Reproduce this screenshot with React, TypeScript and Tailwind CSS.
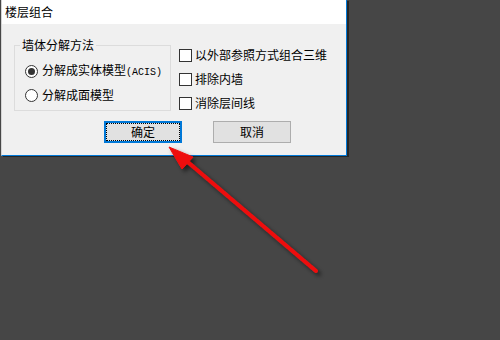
import React from "react";

const Radio = ({ checked, label }: { checked?: boolean; label: React.ReactNode }) => (
    <div className="h-6 flex flex-row items-center">
        <span className="ml-[10px] w-[13px] h-[13px] rounded-full border border-[#333333] bg-white flex items-center justify-center">
            {checked && <span className="w-[7px] h-[7px] rounded-full bg-[#333333]" />}
        </span>
        <span className="ml-[4px] leading-none">{label}</span>
    </div>
);

const Check = ({ label }: { label: string }) => (
    <div className="h-6 flex flex-row items-center">
        <span className="w-[13px] h-[13px] border border-[#333333] bg-white" />
        <span className="ml-[3px] leading-none">{label}</span>
    </div>
);

const App = () => {
    return (
        <div className="relative w-[500px] h-[340px] bg-[#464646] overflow-hidden text-[12px] text-black font-['Noto_Sans_CJK_SC',sans-serif]">
            {/* 对话框 */}
            <div className="ml-px w-[346px] h-[156px] flex flex-col border-l border-l-[#d4d4d4] border-r border-r-[#0078d7] border-b border-b-[#0078d7] shadow-[2px_1px_0_#262626] bg-[#f0f0f0]">
                <div className="h-6 shrink-0 bg-white flex items-center pl-[3px]">楼层组合</div>

                <div className="flex flex-col">
                    <div className="flex flex-row items-start pt-[14px]">
                        <fieldset className="ml-3 w-[157px] border border-[#dcdcdc] pb-[3px]">
                            <legend className="ml-[5px] px-[2px] leading-[14px]">墙体分解方法</legend>
                            <div className="mt-[7px]">
                                <Radio
                                    checked
                                    label={
                                        <>
                                            分解成实体模型
                                            <span className="font-['Liberation_Mono',monospace] text-[10px]">(ACIS)</span>
                                        </>
                                    }
                                />
                                <Radio label="分解成面模型" />
                            </div>
                        </fieldset>

                        <div className="ml-2 mt-[5px] flex flex-col">
                            <Check label="以外部参照方式组合三维" />
                            <Check label="排除内墙" />
                            <Check label="消除层间线" />
                        </div>
                    </div>

                    <div className="mt-[6px] ml-[102px] flex flex-row gap-[31px]">
                        <button className="w-[78px] h-[22px] bg-[#e1e1e1] border-2 border-[#0078d7] outline-1 outline-dotted outline-black outline-offset-[-3px] flex items-center justify-center">
                            确定
                        </button>
                        <button className="w-[78px] h-[22px] bg-[#e1e1e1] border border-[#adadad] flex items-center justify-center">
                            取消
                        </button>
                    </div>
                </div>
            </div>

            {/* 红色箭头 */}
            <svg className="absolute inset-0 pointer-events-none" width="500" height="340" viewBox="0 0 500 340">
                <defs>
                    <filter id="sh" x="-20%" y="-20%" width="140%" height="140%">
                        <feDropShadow dx="3" dy="3" stdDeviation="2" floodColor="#000" floodOpacity="0.55" />
                    </filter>
                </defs>
                <g filter="url(#sh)" fill="#ee1111" stroke="#ee1111">
                    <line x1="183" y1="158" x2="316" y2="271" strokeWidth="4" strokeLinecap="round" />
                    <polygon points="169,147 193,157 182,169" strokeWidth="1" strokeLinejoin="round" />
                </g>
            </svg>
        </div>
    );
};

export default App;
